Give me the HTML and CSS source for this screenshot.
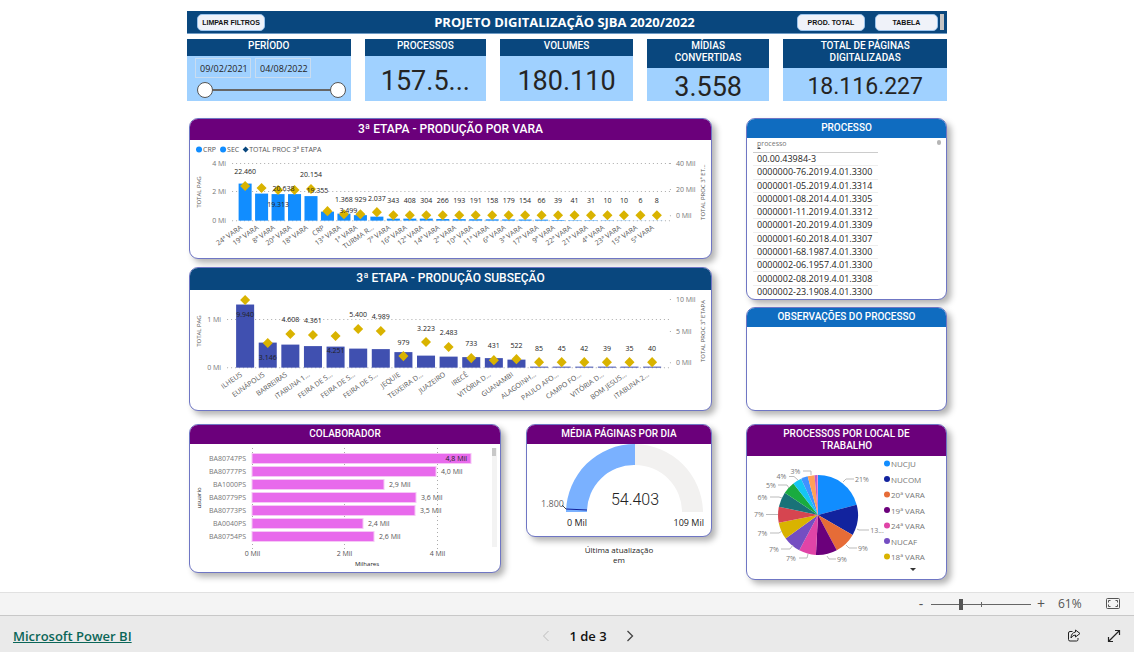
FILE: index.html
```html
<!DOCTYPE html>
<html lang="pt-BR">
<head>
<meta charset="utf-8">
<meta name="viewport" content="width=device-width, initial-scale=1">
<title>Projeto Digitalização SJBA 2020/2022</title>
<link rel="stylesheet" href="styles.css">
</head>
<body>
<main class="report">
  <header class="banner">
    <div class="banner-side"><button class="pill" type="button">LIMPAR FILTROS</button></div>
    <h1 class="banner-title">PROJETO DIGITALIZAÇÃO SJBA 2020/2022</h1>
    <nav class="banner-side banner-nav">
      <button class="pill" type="button">PROD. TOTAL</button>
      <button class="pill pill-small" type="button">TABELA</button>
      <span class="banner-thumb"></span>
    </nav>
  </header>

  <section class="kpis">
    <article class="kpi">
      <h2 class="kpi-title">PERÍODO</h2>
      <div class="period">
        <div class="dates">
          <input class="date" type="text" value="09/02/2021" aria-label="Data inicial">
          <input class="date" type="text" value="04/08/2022" aria-label="Data final">
        </div>
        <div class="range">
          <input class="range-input" type="range" value="0" aria-label="Início do período">
          <input class="range-input" type="range" value="100" aria-label="Fim do período">
        </div>
      </div>
    </article>
    <article class="kpi"><h2 class="kpi-title">PROCESSOS</h2><p class="kpi-value">157.5...</p></article>
    <article class="kpi"><h2 class="kpi-title">VOLUMES</h2><p class="kpi-value">180.110</p></article>
    <article class="kpi"><h2 class="kpi-title">MÍDIAS<br>CONVERTIDAS</h2><p class="kpi-value">3.558</p></article>
    <article class="kpi"><h2 class="kpi-title">TOTAL DE PÁGINAS<br>DIGITALIZADAS</h2><p class="kpi-value kpi-value-long">18.116.227</p></article>
  </section>

  <div class="board">
    <div class="column">
      <section class="panel">
        <h2 class="panel-title panel-title-large purple">3ª ETAPA - PRODUÇÃO POR VARA</h2>
        <svg class="chart" id="vara" viewBox="0 0 520 118" role="img" aria-label="Produção por vara"></svg>
      </section>
      <section class="panel">
        <h2 class="panel-title panel-title-large navy">3ª ETAPA - PRODUÇÃO SUBSEÇÃO</h2>
        <svg class="chart" id="subsecao" viewBox="0 0 520 120" role="img" aria-label="Produção por subseção"></svg>
      </section>
      <div class="lower">
        <section class="panel">
          <h2 class="panel-title purple">COLABORADOR</h2>
          <svg class="chart" id="colaborador" viewBox="0 0 310 128" role="img" aria-label="Produção por colaborador"></svg>
        </section>
        <div class="gauge-column">
          <section class="panel">
            <h2 class="panel-title purple">MÉDIA PÁGINAS POR DIA</h2>
            <svg class="chart" id="media" viewBox="0 0 184 92" role="img" aria-label="Média de páginas por dia">
              <path fill="#7ab1ff" d="M39 68A69 69 0 0 1 108 0V21A47 47 0 0 0 60 68Z"/>
              <path fill="#f2f1f0" d="M108 0A69 69 0 0 1 176 68H155A47 47 0 0 0 108 21Z"/>
              <path fill="none" stroke="#12239e" d="M39 65L60 66"/>
              <path fill="none" stroke="#444" d="M35 61L39 65"/>
              <text class="gauge-label muted end" x="37" y="59">1.800</text>
              <text class="gauge-value middle" x="108" y="55">54.403</text>
              <text class="gauge-label middle" x="50" y="78">0 Mil</text>
              <text class="gauge-label end" x="177" y="78">109 Mil</text>
            </svg>
          </section>
          <p class="updated">Última atualização<br>em</p>
        </div>
      </div>
    </div>

    <div class="column side">
      <section class="panel">
        <h2 class="panel-title blue">PROCESSO</h2>
        <div class="table-box">
          <table class="processes">
            <thead><tr><th>processo<span class="sort"></span></th></tr></thead>
            <tbody>
              <tr><td>00.00.43984-3</td></tr>
              <tr><td>0000000-76.2019.4.01.3300</td></tr>
              <tr><td>0000001-05.2019.4.01.3314</td></tr>
              <tr><td>0000001-08.2014.4.01.3305</td></tr>
              <tr><td>0000001-11.2019.4.01.3312</td></tr>
              <tr><td>0000001-20.2019.4.01.3309</td></tr>
              <tr><td>0000001-60.2018.4.01.3307</td></tr>
              <tr><td>0000001-68.1987.4.01.3300</td></tr>
              <tr><td>0000002-06.1957.4.01.3300</td></tr>
              <tr><td>0000002-08.2019.4.01.3308</td></tr>
              <tr><td>0000002-23.1908.4.01.3300</td></tr>
            </tbody>
          </table>
          <span class="table-thumb"></span>
        </div>
      </section>
      <section class="panel notes">
        <h2 class="panel-title blue">OBSERVAÇÕES DO PROCESSO</h2>
      </section>
      <section class="panel place">
        <h2 class="panel-title purple">PROCESSOS POR LOCAL DE<br>TRABALHO</h2>
        <svg class="chart" id="local" viewBox="0 0 199 123" role="img" aria-label="Processos por local de trabalho"></svg>
      </section>
    </div>
  </div>
</main>

<div class="zoombar">
  <button class="icon-button zoom-sign" type="button" aria-label="Reduzir">-</button>
  <input class="zoom-range" type="range" min="0" max="100" value="29" aria-label="Zoom">
  <button class="icon-button zoom-sign" type="button" aria-label="Ampliar">+</button>
  <span class="zoom-value">61%</span>
  <button class="icon-button" type="button" aria-label="Ajustar à página">
    <svg width="14" height="12" viewBox="0 0 14 12" fill="none" stroke="#555"><rect x="0.5" y="0.5" width="13" height="10" rx="1"/><path d="M2.5 4.500V2.500H4.500M9.500 2.500H11.500V4.500M11.500 6.500V8.500H9.500M4.500 8.500H2.500V6.500"/></svg>
  </button>
</div>

<footer class="footer">
  <div class="footer-side"><a class="brand" href="#">Microsoft Power BI</a></div>
  <nav class="pager">
    <button class="icon-button" type="button" aria-label="Página anterior" disabled><svg width="8" height="12" viewBox="0 0 8 12" fill="none" stroke="#bdbdbd"><path d="M6.500 1L1.500 6L6.500 11"/></svg></button>
    <span>1 de 3</span>
    <button class="icon-button" type="button" aria-label="Próxima página"><svg width="8" height="12" viewBox="0 0 8 12" fill="none" stroke="#444" stroke-width="1.3"><path d="M1.500 1L6.500 6L1.500 11"/></svg></button>
  </nav>
  <div class="footer-side footer-actions">
    <button class="icon-button" type="button" aria-label="Compartilhar"><svg width="14" height="13" viewBox="0 0 14 13" fill="none" stroke="#222" stroke-linejoin="round"><path d="M5.500 2.500H3Q1.500 2.500 1.500 4V10.500Q1.500 12 3 12H9.500Q11 12 11 10.500V9"/><path d="M8.500 1L13 4.500L8.500 8V6Q5.500 6 4 9Q4 4 8.500 3Z"/></svg></button>
    <button class="icon-button" type="button" aria-label="Tela cheia"><svg width="14" height="14" viewBox="0 0 14 14" fill="none" stroke="#222" stroke-width="1.200"><path d="M1.500 12.500L12.500 1.500M8 1.500H12.500V6M1.500 8V12.500H6"/></svg></button>
  </div>
</footer>
<script src="charts.js"></script>
</body>
</html>
```
FILE: styles.css
```css
* { box-sizing: border-box; }

body {
  margin: 0;
  min-height: 100vh;
  display: flex;
  flex-direction: column;
  background: #fff;
  color: #252423;
  font-family: "Open Sans", "Noto Sans", sans-serif;
}

h1, h2, p { margin: 0; }
button, input { font: inherit; color: inherit; }

.report { flex: 1; padding: 11px 187px 8px; }

.banner {
  display: grid;
  grid-template-columns: 1fr auto 1fr;
  align-items: center;
  height: 23px;
  padding: 0 3px 0 10px;
  background: #09477e;
  border-bottom: 1px solid #6f9bc4;
}
.banner-title { padding-right: 12px; color: #fff; font-size: 13px; line-height: 20px; font-weight: 700; }
.banner-side { display: flex; align-items: center; }
.banner-nav { justify-content: flex-end; gap: 10px; }
.banner-thumb { width: 4px; height: 16px; margin-left: -8px; background: #c4c4c4; }
.pill {
  width: 68px;
  height: 17px;
  padding: 0;
  border: 1px solid #9cc4ec;
  border-radius: 5px;
  background: #eff2f9;
  color: #111;
  font: 700 7px/15px "Liberation Sans", Arial, sans-serif;
  white-space: nowrap;
}
.pill-small { width: 63px; }

.kpis {
  display: grid;
  grid-template-columns: 164fr 122fr 133fr 123fr 164fr;
  gap: 14px;
  margin-top: 5px;
}
.kpi { display: flex; flex-direction: column; min-height: 62px; background: #a0d1ff; }
.kpi-title {
  padding: 1px 0 4px;
  background: #09477e;
  color: #fff;
  text-align: center;
  font: 500 10px/12px Roboto, sans-serif;
}
.kpi-value {
  flex: 1;
  display: flex;
  align-items: center;
  justify-content: center;
  padding-top: 4px;
  font: 400 27px/28px Roboto, sans-serif;
}
.kpi-value-long { font-size: 23px; }

.period { padding: 2px 5px 2px 8px; }
.dates { display: flex; gap: 4px; }
.date {
  width: 56px;
  height: 20px;
  padding: 0 2px 0 4px;
  border: 1px solid #c9dcf0;
  background: transparent;
  font-size: 9px;
}
.range {
  display: grid;
  align-items: center;
  height: 16px;
  margin: 4px 0 0 2px;
  background: linear-gradient(#666, #666) center / calc(100% - 16px) 2px no-repeat;
}
.range-input {
  grid-area: 1 / 1;
  width: 100%;
  height: 16px;
  margin: 0;
  appearance: none;
  background: none;
  pointer-events: none;
}
.range-input::-webkit-slider-thumb {
  appearance: none;
  width: 16px;
  height: 16px;
  border: 1px solid #555;
  border-radius: 50%;
  background: #fff;
  pointer-events: auto;
}

.board {
  display: grid;
  grid-template-columns: 523fr 201fr;
  gap: 34px;
  margin-top: 17px;
  padding-left: 2px;
}
.column { display: flex; flex-direction: column; gap: 8px; min-width: 0; }
.side { gap: 7px; }
.panel {
  overflow: hidden;
  border: 1px solid #6f76c4;
  border-radius: 9px;
  background: #fff;
  box-shadow: 4px 4px 6px rgba(0, 0, 0, 0.3);
}
.panel-title {
  padding-bottom: 1px;
  color: #fff;
  text-align: center;
  font: 500 10px/18px Roboto, sans-serif;
}
.panel-title-large { font-size: 12px; line-height: 20px; }
.purple { background: #6b007b; }
.navy { padding-bottom: 2px; background: #09477e; }
.blue { background: #0f6cc0; }
.chart { display: block; width: 100%; height: auto; }

.lower {
  display: grid;
  grid-template-columns: 312fr 186fr;
  align-items: start;
  gap: 25px;
  margin-top: 5px;
}
.updated { margin-top: 8px; text-align: center; font-size: 8px; line-height: 10px; }

.table-box {
  display: flex;
  justify-content: space-between;
  align-items: flex-start;
  padding: 2px 5px 1px 6px;
}
.processes { width: 125px; height: 158px; border-collapse: collapse; }
.processes th {
  padding: 0 4px 3px;
  border-bottom: 1px solid #ccc;
  color: #777;
  text-align: left;
  vertical-align: top;
  font-size: 7px;
  line-height: 7px;
  font-weight: 400;
}
.processes td { padding: 0 4px; border-bottom: 1px solid #eee; font-size: 9px; line-height: 12px; }
.processes tr:last-child td { border-bottom: 0; }
.processes th { border-bottom: 1px solid #ccc; }
.sort { display: block; width: 4px; border: 2px solid transparent; border-top: 0; border-bottom-color: #444; }
.table-thumb { width: 4px; height: 5px; border-radius: 2px; background: #b5b5b5; }
.notes { min-height: 104px; }
.place { margin-top: 6px; }
.place .panel-title { padding: 3px 0 4px; line-height: 12px; }

svg text { font-family: "Open Sans", "Noto Sans", sans-serif; font-size: 7px; fill: #555; dominant-baseline: central; }
svg .middle { text-anchor: middle; }
svg .end { text-anchor: end; }
svg .axis { fill: #777; }
svg .title { font-size: 6px; }
svg .dark { fill: #222; }
svg .legend { font-size: 8px; fill: #777; }
svg .gauge-label { font-size: 9px; fill: #252423; }
svg .muted { fill: #666; }
svg .gauge-value { font-family: Roboto, sans-serif; font-size: 16px; font-weight: 300; fill: #222; }
.grid { stroke: #aaa; stroke-dasharray: 1 3; }
.leader { fill: none; stroke: #bbb; }

.zoombar {
  display: flex;
  align-items: center;
  justify-content: flex-end;
  height: 23px;
  padding-right: 14px;
  border-top: 1px solid #e1e1e1;
  background: #f4f4f4;
  color: #555;
}
.icon-button { display: flex; padding: 0; border: 0; background: none; }
.zoom-sign { justify-content: center; width: 20px; font-size: 14px; line-height: 16px; }
.zoom-range {
  width: 100px;
  height: 12px;
  margin: 0;
  appearance: none;
  background:
    linear-gradient(#666, #666) center / 100% 1px no-repeat,
    linear-gradient(#666, #666) center / 1px 5px no-repeat;
}
.zoom-range::-webkit-slider-thumb { appearance: none; width: 4px; height: 11px; background: #555; }
.zoom-value { width: 40px; margin: 0 8px 0 7px; font-size: 12px; line-height: 16px; }

.footer {
  display: grid;
  grid-template-columns: 1fr auto 1fr;
  align-items: center;
  height: 37px;
  padding: 3px 13px 0;
  border-top: 1px solid #c8c8c8;
  background: #eaeaea;
  color: #111;
  font-size: 13px;
  line-height: 18px;
  font-weight: 600;
}
.footer-side { display: flex; align-items: center; }
.brand { color: #0b6658; font-size: 13px; font-weight: 600; }
.pager { display: flex; align-items: center; gap: 19px; margin-left: 42px; }
.footer-actions { justify-content: flex-end; gap: 26px; }

@media (max-width: 900px) {
  .report { padding-left: 16px; padding-right: 16px; }
}
```
FILE: charts.js
```javascript
const NS = "http://www.w3.org/2000/svg";

function add(svg, tag, attrs, text) {
  const node = document.createElementNS(NS, tag);
  for (const key in attrs) node.setAttribute(key, attrs[key]);
  if (text !== undefined) node.textContent = text;
  svg.appendChild(node);
  return node;
}

function label(svg, x, y, text, cls) {
  return add(svg, "text", { x, y, class: cls || "" }, text);
}

function diamond(svg, x, y, size, fill) {
  add(svg, "path", { fill, d: `M${x} ${y - size}l${size} ${size}l${-size} ${size}l${-size} ${-size}z` });
}

function turned(svg, x, y, text, angle, cls) {
  add(svg, "text", { transform: `translate(${x} ${y}) rotate(${angle})`, class: cls }, text);
}

// Columns with a diamond marker for the second axis.
// rows: [name, bar height, marker y, label, label y, label x offset]
function combo(id, o) {
  const svg = document.getElementById(id);
  o.lines.forEach(([y, text]) => {
    add(svg, "line", { class: "grid", x1: o.gridStart, x2: 480, y1: y, y2: y });
    label(svg, o.gridStart - 6, y, text, "end axis");
  });
  o.ticks.forEach(([y, text]) => {
    add(svg, "line", { class: "grid", x1: 479, x2: 480, y1: y, y2: y });
    label(svg, 485, y, text, "axis");
  });
  turned(svg, 9, o.titleY, "TOTAL PAG", -90, "middle title");
  turned(svg, 512, o.titleY, o.rightTitle, -90, "middle title");
  const at = i => 55 + o.step * i;
  o.rows.forEach((r, i) => add(svg, "rect", {
    x: at(i) - o.bar / 2, y: o.base - r[1], width: o.bar, height: r[1], fill: o.fill
  }));
  o.rows.forEach((r, i) => {
    diamond(svg, at(i), r[2], 5, "#d9b300");
    turned(svg, at(i) - 4, o.base + 6, r[0], -35, "end");
  });
  o.rows.forEach((r, i) => {
    if (r[3]) label(svg, at(i) + (r[5] || 0), r[4], r[3], "middle dark");
  });
  return svg;
}

const small = ["7ª VARA|343", "16ª VARA|408", "12ª VARA|304", "14ª VARA|266", "2ª VARA|193",
  "10ª VARA|191", "11ª VARA|158", "6ª VARA|179", "3ª VARA|154", "17ª VARA|66", "9ª VARA|39",
  "22ª VARA|41", "21ª VARA|31", "4ª VARA|10", "23ª VARA|10", "15ª VARA|6", "5ª VARA|8"];
const smallHeights = [2, 2, 2, 1.6, 1.5, 1.4, 1.3, 1.2, 1.1, 1, 0.6, 0.4, 0.4, 0.3, 0.2, 0.1, 0.1];

const vara = combo("vara", {
  gridStart: 42, base: 80.500, step: 16.440, bar: 13, fill: "#118dff", titleY: 52,
  rightTitle: "TOTAL PROC 3ª ET...",
  lines: [[23.500, "4 Mi"], [51.500, "2 Mi"], [80.500, "0 Mi"]],
  ticks: [[23.500, "40 Mil"], [49.500, "20 Mil"], [75.500, "0 Mil"]],
  rows: [
    ["24ª VARA", 37, 46, "22.460", 31],
    ["19ª VARA", 27, 48],
    ["8ª VARA", 26.500, 50, "19.313", 64],
    ["20ª VARA", 26.500, 50, "20.638", 48, -11],
    ["18ª VARA", 24.500, 49, "20.154", 34],
    ["CRP", 9, 71, "19.355", 50, -10],
    ["13ª VARA", 7, 74, "1.368", 59],
    ["1ª VARA", 5.500, 74, "929", 59],
    ["TURMA R...", 4, 72, "2.037", 58],
    ...small.map((s, i) => [s.split("|")[0], smallHeights[i], 75, s.split("|")[1], 60])
  ]
});
label(vara, 158, 70, "3.499", "middle dark");
add(vara, "circle", { cx: 9, cy: 9.500, r: 3, fill: "#118dff" });
label(vara, 13, 9.500, "CRP");
add(vara, "circle", { cx: 33, cy: 9.500, r: 3, fill: "#118dff" });
label(vara, 37, 9.500, "SEC");
diamond(vara, 55.500, 9.500, 3, "#09477e");
label(vara, 59, 9.500, "TOTAL PROC 3ª ETAPA");

combo("subsecao", {
  gridStart: 37, base: 77.500, step: 22.570, bar: 18, fill: "#4050b0", titleY: 41,
  rightTitle: "TOTAL PROC 3ª ETAPA",
  lines: [[29.500, "1 Mi"], [77.500, "0 Mi"]],
  ticks: [[9.500, "10 Mil"], [41.500, "5 Mil"], [72.500, "0 Mil"]],
  rows: [
    ["ILHEUS", 63, 10, "9.940", 24], ["EUNÁPOLIS", 25, 53, "3.146", 67],
    ["BARREIRAS", 23, 44, "4.608", 29.500], ["ITABUNA 1...", 21.500, 45, "4.361", 30.500],
    ["FEIRA DE S...", 21, 46, "4.251", 60.500], ["FEIRA DE S...", 19, 39, "5.400", 24],
    ["FEIRA DE S...", 18.500, 41, "4.989", 26.500], ["JEQUIE", 15.500, 66, "979", 52],
    ["TEIXEIRA D...", 12, 52, "3.223", 38.500], ["JUAZEIRO", 11, 57, "2.483", 42.500],
    ["IRECÊ", 10.500, 68, "733", 53], ["VITÓRIA D...", 9.500, 70, "431", 55],
    ["GUANAMBI", 8, 69, "522", 55], ["ALAGOINH...", 1, 72, "85", 58],
    ["PAULO AFO...", 1, 72, "45", 58], ["CAMPO FO...", 1, 72, "42", 58],
    ["VITÓRIA D...", 1, 72, "39", 58], ["BOM JESUS...", 1, 72, "35", 58],
    ["ITABUNA 2...", 1, 72, "40", 58]
  ]
});

const people = document.getElementById("colaborador");
[[62.500, "0 Mil"], [154.500, "2 Mil"], [247.500, "4 Mil"]].forEach(([x, text]) => {
  add(people, "line", { class: "grid", x1: x, x2: x, y1: 4, y2: 105 });
  label(people, x, 109.500, text, "middle");
});
[["BA80747PS", 219, "4,8 Mil"], ["BA80777PS", 184, "4,0 Mil"], ["BA1000PS", 132, "2,9 Mil"],
  ["BA80779PS", 164, "3,6 Mil"], ["BA80773PS", 163, "3,5 Mil"], ["BA0040PS", 111, "2,4 Mil"],
  ["BA80754PS", 122, "2,6 Mil"]].forEach(([name, width, value], i) => {
  const y = 14.500 + 13 * i;
  label(people, 56, y, name, "end axis");
  add(people, "rect", { x: 62, y: y - 5, width, height: 10, fill: "#e86aec", stroke: "#f6c8f6" });
  if (i === 0) label(people, 277, y, value, "end dark");
  else label(people, 67 + width, y, value);
});
turned(people, 9, 54, "usuario", -90, "middle title dark");
add(people, "text", { x: 177, y: 120, class: "middle title dark" }, "Milhares");
add(people, "rect", { x: 302, y: 4, width: 5, height: 99, fill: "#f3f3f3" });
add(people, "rect", { x: 302, y: 4, width: 4, height: 8, fill: "#c8c8c8" });

const pie = document.getElementById("local");
const center = [71, 59], radius = 40;
const point = deg => {
  const a = deg * Math.PI / 180;
  return `${center[0] + radius * Math.sin(a)} ${center[1] - radius * Math.cos(a)}`;
};
let from = 0;
[[75, "#118dff"], [120, "#12239e"], [152, "#e66c37"], [183, "#6b007b"], [208, "#e044a7"],
  [234, "#744ec2"], [259, "#d9b300"], [282, "#d64550"], [304, "#197278"], [322, "#1aab40"],
  [335, "#15c6f4"], [345, "#4092ff"], [355, "#ffa058"], [359, "#be5dc9"], [360, "#f472d0"]
].forEach(([to, fill]) => {
  add(pie, "path", { fill, d: `M${center.join(" ")}L${point(from)}A${radius} ${radius} 0 0 1 ${point(to)}Z` });
  from = to;
});
["M96 26L99 23H107", "M110 73L112 74H122", "M99 89L102 92H110", "M80 100L82 103H89",
  "M61 98L60 102H52", "M46 89L43 93H34", "M35 75L32 77H23", "M31 58.500H19", "M35 42L32 41H23",
  "M42 32L40 29H31", "M51 24L47 20.500H42", "M64 19V15H56"
].forEach(d => add(pie, "path", { class: "leader", d }));
[[115, 23.500, "21%"], [130, 74.500, "13..."], [116, 92.500, "9%"], [95, 103.500, "9%"], [44, 102.500, "7%"],
  [27, 93.500, "7%"], [15.500, 77.500, "7%"], [12, 58.500, "7%"], [15.500, 41.500, "6%"], [24, 29.500, "5%"],
  [34.500, 20.500, "4%"], [48.500, 15.500, "3%"]
].forEach(([x, y, text]) => label(pie, x, y, text, "middle axis"));
[["NUCJU", "#118dff"], ["NUCOM", "#12239e"], ["20ª VARA", "#e66c37"], ["19ª VARA", "#6b007b"],
  ["24ª VARA", "#e044a7"], ["NUCAF", "#744ec2"], ["18ª VARA", "#d9b300"]].forEach(([name, fill], i) => {
  const y = 7.500 + 15.500 * i;
  add(pie, "circle", { cx: 140, cy: y, r: 3, fill });
  label(pie, 144, y, name, "legend");
});
add(pie, "path", { d: "M163 112H169L166 115Z", fill: "#333" });
```
